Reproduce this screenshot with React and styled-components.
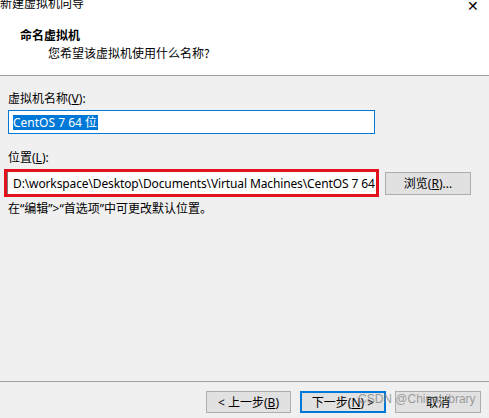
import React from 'react'
import styled, {createGlobalStyle} from 'styled-components'

const GlobalStyle = createGlobalStyle`
  html, body { margin:0; padding:0; background:#f0f0f0; }
  body { font-family:"Segoe UI","Noto Sans","Noto Sans CJK SC",sans-serif; font-size:12px; color:#000; }
`

const Window = styled.div`
  position:relative;
  width:489px;
  height:418px;
  overflow:hidden;
  display:flex;
  flex-direction:column;
  background:#f0f0f0;
`

const Header = styled.div`
  height:75px;
  flex-shrink:0;
  background:#fff;
  border-bottom:1px solid #a0a0a0;
`

const TitleBar = styled.div`
  display:flex;
  justify-content:space-between;
  align-items:center;
  height:12px;
  margin-top:-3px;
  padding-right:10px;
  line-height:12px;
  font-family:"Noto Sans CJK SC",sans-serif;
`

const Close = styled.span`
  font-size:14px;
  font-weight:300;
  margin-top:4px;
`

const HeaderTitle = styled.div`
  margin:18px 0 0 20px;
  line-height:16px;
  font-weight:bold;
  font-family:"Noto Sans CJK SC",sans-serif;
`

const HeaderSub = styled.div`
  margin:2px 0 0 48px;
  line-height:16px;
  font-family:"Noto Sans CJK SC",sans-serif;
`

const Body = styled.div`
  flex:1;
  padding:15px 8px 0;
`

const Label = styled.div`
  line-height:16px;
  margin-top:${p => p.$top || 0}px;
`

const NameInput = styled.div`
  margin-top:3px;
  width:367px;
  height:24px;
  box-sizing:border-box;
  border:1px solid #0078d7;
  background:#fff;
  padding:3px 0 0 4px;
`

const Selected = styled.span`
  display:inline-block;
  background:#0078d7;
  color:#fff;
  line-height:15px;
  height:15px;
  padding-right:1px;
`

const PathRow = styled.div`
  display:flex;
  align-items:center;
  gap:6px;
  margin:3px 0 0 -4px;
`

const Highlight = styled.div`
  width:375px;
  height:28px;
  box-sizing:border-box;
  border:3px solid #e3131b;
  background:#fff;
  display:flex;
  align-items:center;
`

const PathInput = styled.div`
  flex:1;
  height:100%;
  border-left:1px solid #7a7a7a;
  padding-left:5px;
  display:flex;
  align-items:center;
  white-space:nowrap;
  overflow:hidden;
  letter-spacing:-0.12px;
`

const Button = styled.div`
  width:${p => p.$w || 86}px;
  height:${p => p.$h || 23}px;
  box-sizing:border-box;
  border:${p => p.$primary ? '2px solid #0078d7' : '1px solid #adadad'};
  background:#e1e1e1;
  display:flex;
  align-items:center;
  justify-content:center;
  white-space:nowrap;
`

const Hint = styled.div`
  margin-top:4px;
  line-height:16px;
`

const Footer = styled.div`
  flex-shrink:0;
  height:37px;
  border-top:1px solid #a0a0a0;
  display:flex;
  justify-content:flex-end;
  gap:9px;
  padding:9px 8px 0 0;
  box-sizing:border-box;
`

const Watermark = styled.div`
  position:absolute;
  left:358px;
  top:392px;
  font-family:"Liberation Sans",Arial,sans-serif;
  font-size:12px;
  color:rgba(130,130,130,0.75);
  pointer-events:none;
`

export default function App() {
  return (
    <Window>
      <GlobalStyle />
      <Header>
        <TitleBar>
          <span>新建虚拟机向导</span>
          <Close>✕</Close>
        </TitleBar>
        <HeaderTitle>命名虚拟机</HeaderTitle>
        <HeaderSub>您希望该虚拟机使用什么名称?</HeaderSub>
      </Header>
      <Body>
        <Label>虚拟机名称(<u>V</u>):</Label>
        <NameInput>
          <Selected>CentOS 7 64 位</Selected>
        </NameInput>
        <Label $top={16}>位置(<u>L</u>):</Label>
        <PathRow>
          <Highlight>
            <PathInput>D:\workspace\Desktop\Documents\Virtual Machines\CentOS 7 64</PathInput>
          </Highlight>
          <Button>浏览(<u>R</u>)...</Button>
        </PathRow>
        <Hint>在“编辑”&gt;“首选项”中可更改默认位置。</Hint>
      </Body>
      <Footer>
        <Button $w={85} $h={22}>&lt; 上一步(<u>B</u>)</Button>
        <Button $w={86} $h={22} $primary>下一步(<u>N</u>) &gt;</Button>
        <Button $w={86} $h={22}>取消</Button>
      </Footer>
      <Watermark>CSDN @ChinaLibrary</Watermark>
    </Window>
  )
}
